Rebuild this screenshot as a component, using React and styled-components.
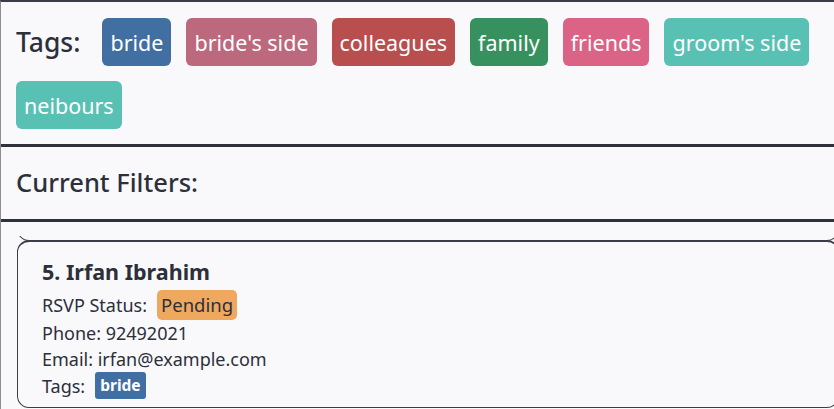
import React from "react";
import styled, { createGlobalStyle } from "styled-components";

const tags = [
    { name: "bride", color: "#416fa1" },
    { name: "bride's side", color: "#bc697d" },
    { name: "colleagues", color: "#b84e4e" },
    { name: "family", color: "#37915f" },
    { name: "friends", color: "#db6386" },
    { name: "groom's side", color: "#59c1b4" },
    { name: "neibours", color: "#59c1b4" },
];

const GlobalStyle = createGlobalStyle`
    html, body { margin: 0; padding: 0; background: #f9f9fb; overflow: hidden; }
    body { font-family: "Noto Sans", "Open Sans", sans-serif; color: #2d2f3a; }
`;

const App = () => (
    <Page>
        <GlobalStyle />
        <TagBar>
            <Label>Tags:</Label>
            {tags.map(t => <Chip key={t.name} $bg={t.color}>{t.name}</Chip>)}
        </TagBar>
        <FilterBar>Current Filters:</FilterBar>
        <ListPanel>
            <Viewport>
                <Scroller>
                    <Card $stub />
                    <Card>
                        <Name>5. Irfan Ibrahim</Name>
                        <Row>RSVP Status: <Status>Pending</Status></Row>
                        <Row>Phone: 92492021</Row>
                        <Row>Email: irfan@example.com</Row>
                        <Row>Tags: <SmallChip>bride</SmallChip></Row>
                    </Card>
                </Scroller>
            </Viewport>
        </ListPanel>
    </Page>
);

const Page = styled.div`
    width: 834px;
    height: 409px;
    display: flex;
    flex-direction: column;
    border-left: 1px solid #8c8c90;
    border-top: 2px solid #3a3c46;
    box-sizing: border-box;
    overflow: hidden;
`;

const TagBar = styled.div`
    display: flex;
    flex-wrap: wrap;
    align-items: center;
    align-content: flex-start;
    gap: 15px;
    padding: 16px 15px 15px;
    height: 145px;
    flex-shrink: 0;
    box-sizing: border-box;
    border-bottom: 3px solid #30323b;
`;

const Label = styled.span`
    font-size: 26.5px;
    font-weight: 500;
    margin-right: 7px;
`;

const Chip = styled.span`
    background: ${p => p.$bg};
    color: #fff;
    font-size: 21.5px;
    height: 48px;
    display: inline-flex;
    align-items: center;
    padding: 0 8px;
    border-radius: 6px;
    box-sizing: border-box;
`;

const FilterBar = styled.div`
    height: 75px;
    flex-shrink: 0;
    box-sizing: border-box;
    display: flex;
    align-items: center;
    padding: 0 15px 2px;
    font-size: 25.5px;
    font-weight: 500;
    border-bottom: 3px solid #30323b;
`;

const ListPanel = styled.div`
    flex: 1;
    padding: 14px 0 0 16px;
    min-height: 0;
    display: flex;
`;

const Viewport = styled.div`
    flex: 1;
    overflow: hidden;
`;

const Scroller = styled.div`
    margin-top: -95px;
`;

const Card = styled.div`
    width: 822px;
    height: ${p => p.$stub ? "100px" : "auto"};
    border: 1.5px solid #3a3c46;
    border-top-width: 2px;
    border-radius: 12px;
    box-sizing: border-box;
    padding: 16px 24px 8px;
    display: flex;
    flex-direction: column;
    margin-top: ${p => p.$stub ? "0" : "-1px"};
`;

const Name = styled.div`
    font-size: 21.5px;
    font-weight: 700;
    line-height: 28px;
    margin-bottom: 4px;
`;

const Row = styled.div`
    font-size: 18px;
    display: flex;
    align-items: center;
    gap: 10px;
    line-height: 26px;
`;

const Status = styled.span`
    background: #eea95f;
    color: #2d2f3a;
    font-size: 18.5px;
    padding: 3px 4px;
    border-radius: 5px;
    line-height: 24px;
`;

const SmallChip = styled.span`
    background: #416fa1;
    color: #fff;
    font-size: 15.5px;
    font-weight: 700;
    padding: 3px 5px;
    border-radius: 3px;
    line-height: 21px;
`;

export default App;
